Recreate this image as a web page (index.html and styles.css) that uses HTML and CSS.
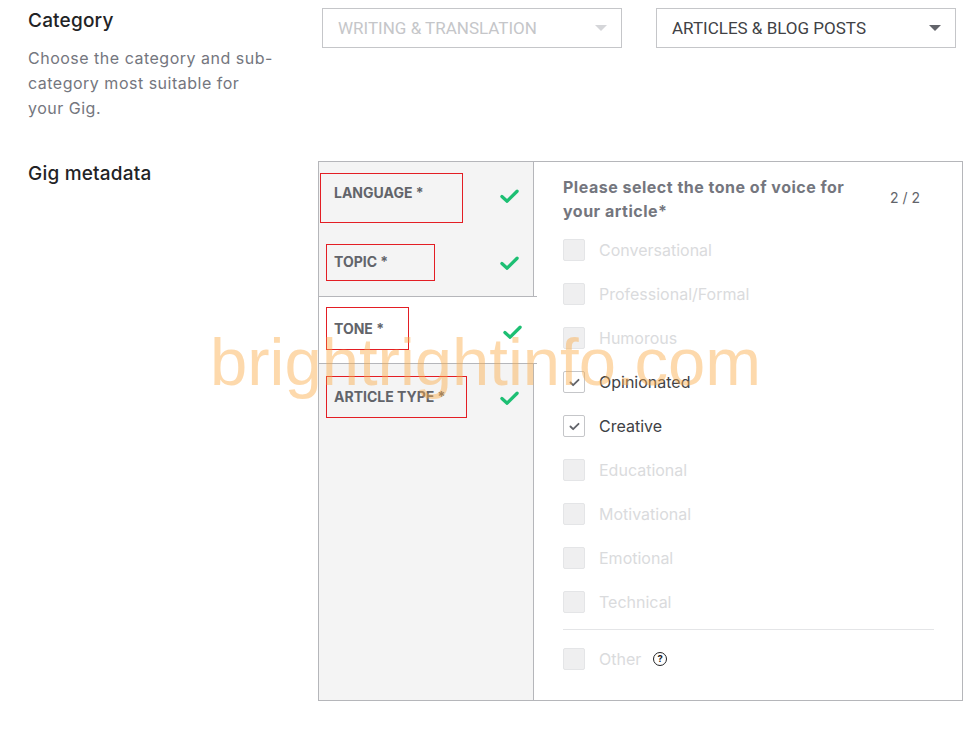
FILE: index.html
```html
<!DOCTYPE html>
<html lang="en">
<head>
    <meta charset="UTF-8">
    <meta name="viewport" content="width=device-width, initial-scale=1.0">
    <title>Gig overview</title>
    <link rel="stylesheet" href="styles.css">
</head>
<body>

    <div class="page">

        <div class="row row-category">
            <div class="label-col">
                <h3>Category</h3>
                <p class="hint">Choose the category and sub-category most suitable for your Gig.</p>
            </div>
            <div class="selects">
                <div class="select disabled">
                    <span>WRITING &amp; TRANSLATION</span>
                    <i class="caret"></i>
                </div>
                <div class="select">
                    <span>ARTICLES &amp; BLOG POSTS</span>
                    <i class="caret"></i>
                </div>
            </div>
        </div>

        <div class="row row-meta">
            <div class="label-col">
                <h3>Gig metadata</h3>
            </div>

            <div class="meta-box">
                <ul class="tabs">
                    <li class="tab">
                        <span class="tab-name">LANGUAGE *</span>
                        <svg class="ok" viewBox="0 0 20 16"><polyline points="2,8.5 7.5,13.5 18,3" /></svg>
                        <span class="mark mark-lang"></span>
                    </li>
                    <li class="tab">
                        <span class="tab-name">TOPIC *</span>
                        <svg class="ok" viewBox="0 0 20 16"><polyline points="2,8.5 7.5,13.5 18,3" /></svg>
                        <span class="mark mark-topic"></span>
                    </li>
                    <li class="tab active">
                        <span class="tab-name">TONE *</span>
                        <svg class="ok" viewBox="0 0 20 16"><polyline points="2,8.5 7.5,13.5 18,3" /></svg>
                        <span class="mark mark-tone"></span>
                    </li>
                    <li class="tab">
                        <span class="tab-name">ARTICLE TYPE *</span>
                        <svg class="ok" viewBox="0 0 20 16"><polyline points="2,8.5 7.5,13.5 18,3" /></svg>
                        <span class="mark mark-type"></span>
                    </li>
                </ul>

                <div class="options">
                    <div class="options-head">
                        <h4>Please select the tone of voice for your article*</h4>
                        <span class="count">2 / 2</span>
                    </div>

                    <ul class="checks">
                        <li class="check off"><span class="box"></span>Conversational</li>
                        <li class="check off"><span class="box"></span>Professional/Formal</li>
                        <li class="check off"><span class="box"></span>Humorous</li>
                        <li class="check on"><span class="box"><svg viewBox="0 0 12 10"><polyline points="1.5,5 4.5,8 10.5,2" /></svg></span>Opinionated</li>
                        <li class="check on"><span class="box"><svg viewBox="0 0 12 10"><polyline points="1.5,5 4.5,8 10.5,2" /></svg></span>Creative</li>
                        <li class="check off"><span class="box"></span>Educational</li>
                        <li class="check off"><span class="box"></span>Motivational</li>
                        <li class="check off"><span class="box"></span>Emotional</li>
                        <li class="check off"><span class="box"></span>Technical</li>
                    </ul>

                    <div class="divider"></div>

                    <div class="check off other"><span class="box"></span>Other <span class="help">?</span></div>
                </div>
            </div>
        </div>

        <div class="watermark">brightrightinfo.com</div>
    </div>

</body>
</html>
```

FILE: styles.css
```css
body {
    margin: 0;
    font-family: Inter, "Noto Sans", sans-serif;
    color: #404145;
    background-color: #fff;
}

.page {
    position: relative;
    width: 970px;
    height: 731px;
    overflow: hidden;
}

ul {
    list-style: none;
    margin: 0;
    padding: 0;
}

.row {
    display: flex;
}

.label-col {
    width: 290px;
    padding-left: 28px;
    flex-shrink: 0;
}

.label-col h3 {
    margin: 0;
    font-size: 19px;
    font-weight: 500;
    line-height: 24px;
    letter-spacing: 0.2px;
    color: #222325;
}

.row-category {
    padding-top: 9px;
    height: 152px;
}

.hint {
    width: 248px;
    margin: 13px 0 0;
    font-size: 16px;
    line-height: 25px;
    letter-spacing: 0.5px;
    color: #74767e;
}

/* dropdowns */

.selects {
    display: flex;
    gap: 34px;
    margin-left: 4px;
    margin-top: -1px;
}

.select {
    width: 300px;
    height: 40px;
    box-sizing: border-box;
    border: 1px solid #c5c6c9;
    display: flex;
    align-items: center;
    justify-content: space-between;
    padding: 0 14px 0 15px;
    font-family: Roboto, "Liberation Sans", sans-serif;
    font-size: 17px;
    color: #404145;
}

.select.disabled {
    color: #c5c6c9;
}

.caret {
    width: 0;
    height: 0;
    border-left: 6px solid transparent;
    border-right: 6px solid transparent;
    border-top: 6px solid #62646a;
}

.select.disabled .caret {
    border-top-color: #d5d6d9;
}

/* metadata box */

.row-meta .label-col h3 {
    margin-top: 1px;
}

.meta-box {
    display: flex;
    width: 645px;
    height: 540px;
    box-sizing: border-box;
    border: 1px solid #b5b6ba;
}

.tabs {
    width: 215px;
    flex-shrink: 0;
    background-color: #f4f4f4;
    border-right: 1px solid #b5b6ba;
    box-sizing: border-box;
}

.tab {
    position: relative;
    height: 68px;
    box-sizing: border-box;
    display: flex;
    justify-content: space-between;
    align-items: flex-start;
    padding: 22px 14px 0 15px;
}

.tab:nth-child(2) {
    height: 66px;
    padding-top: 23px;
}

.tab:nth-child(2) .ok {
    margin-top: 2px;
}

.tab:nth-child(4) {
    padding-top: 24px;
}

.tab:nth-child(4) .ok {
    margin-top: 2px;
}

.tab.active {
    z-index: 1;
    margin-right: -4px;
    padding-right: 15px;
    background-color: #fff;
    border-top: 1px solid #b5b6ba;
    border-bottom: 1px solid #b5b6ba;
    padding-top: 23px;
}

.tab-name {
    font-size: 14px;
    font-weight: 700;
    line-height: 18px;
    color: #62646a;
}

.ok {
    width: 19px;
    height: 16px;
    margin-top: 4px;
    fill: none;
    stroke: #1dbf73;
    stroke-width: 3.4;
    stroke-linecap: round;
    stroke-linejoin: round;
}

/* red annotation boxes from the screenshot */
.mark {
    position: absolute;
    border: 1px solid #e31e24;
    box-sizing: border-box;
}

.mark-lang { top: 11px; left: 1px; width: 143px; height: 50px; }
.mark-topic { top: 14px; left: 7px; width: 109px; height: 37px; }
.mark-tone { top: 10px; left: 7px; width: 83px; height: 43px; }
.mark-type { top: 12px; left: 7px; width: 141px; height: 42px; }

/* options panel */

.options {
    flex: 1;
    padding: 13px 28px 0 29px;
}

.options-head {
    display: flex;
    justify-content: space-between;
    align-items: flex-start;
}

.options-head h4 {
    margin: 0;
    width: 300px;
    font-size: 16px;
    font-weight: 700;
    line-height: 24px;
    letter-spacing: 0.5px;
    color: #74767e;
}

.count {
    margin: 14px 14px 0 0;
    font-size: 14px;
    color: #62646a;
}

.checks {
    margin-top: 5px;
}

.check {
    display: flex;
    align-items: center;
    gap: 14px;
    height: 44px;
    font-size: 16px;
    color: #404145;
}

.check.off {
    color: #dadbdd;
}

.box {
    width: 22px;
    height: 22px;
    box-sizing: border-box;
    border-radius: 2px;
    border: 1px solid #e4e5e7;
    background-color: #efeff0;
    display: flex;
    align-items: center;
    justify-content: center;
}

.check.on .box {
    background-color: #fff;
    border-color: #c5c6c9;
}

.box svg {
    width: 11px;
    height: 9px;
    fill: none;
    stroke: #62646a;
    stroke-width: 2;
    stroke-linecap: round;
    stroke-linejoin: round;
}

.divider {
    height: 1px;
    background-color: #e4e5e7;
    margin-top: 5px;
}

.other {
    margin-top: 7px;
}

.help {
    width: 12px;
    height: 12px;
    margin-left: -2px;
    border: 1.6px solid #222325;
    border-radius: 50%;
    font-size: 9.5px;
    font-weight: 700;
    line-height: 12px;
    text-align: center;
    color: #222325;
}

/* watermark over the page */
.watermark {
    position: absolute;
    left: 210px;
    top: 329px;
    font-family: "Liberation Sans", Arial, sans-serif;
    font-size: 67px;
    line-height: 66px;
    color: rgba(250, 170, 70, 0.45);
    pointer-events: none;
    z-index: 5;
}
```
